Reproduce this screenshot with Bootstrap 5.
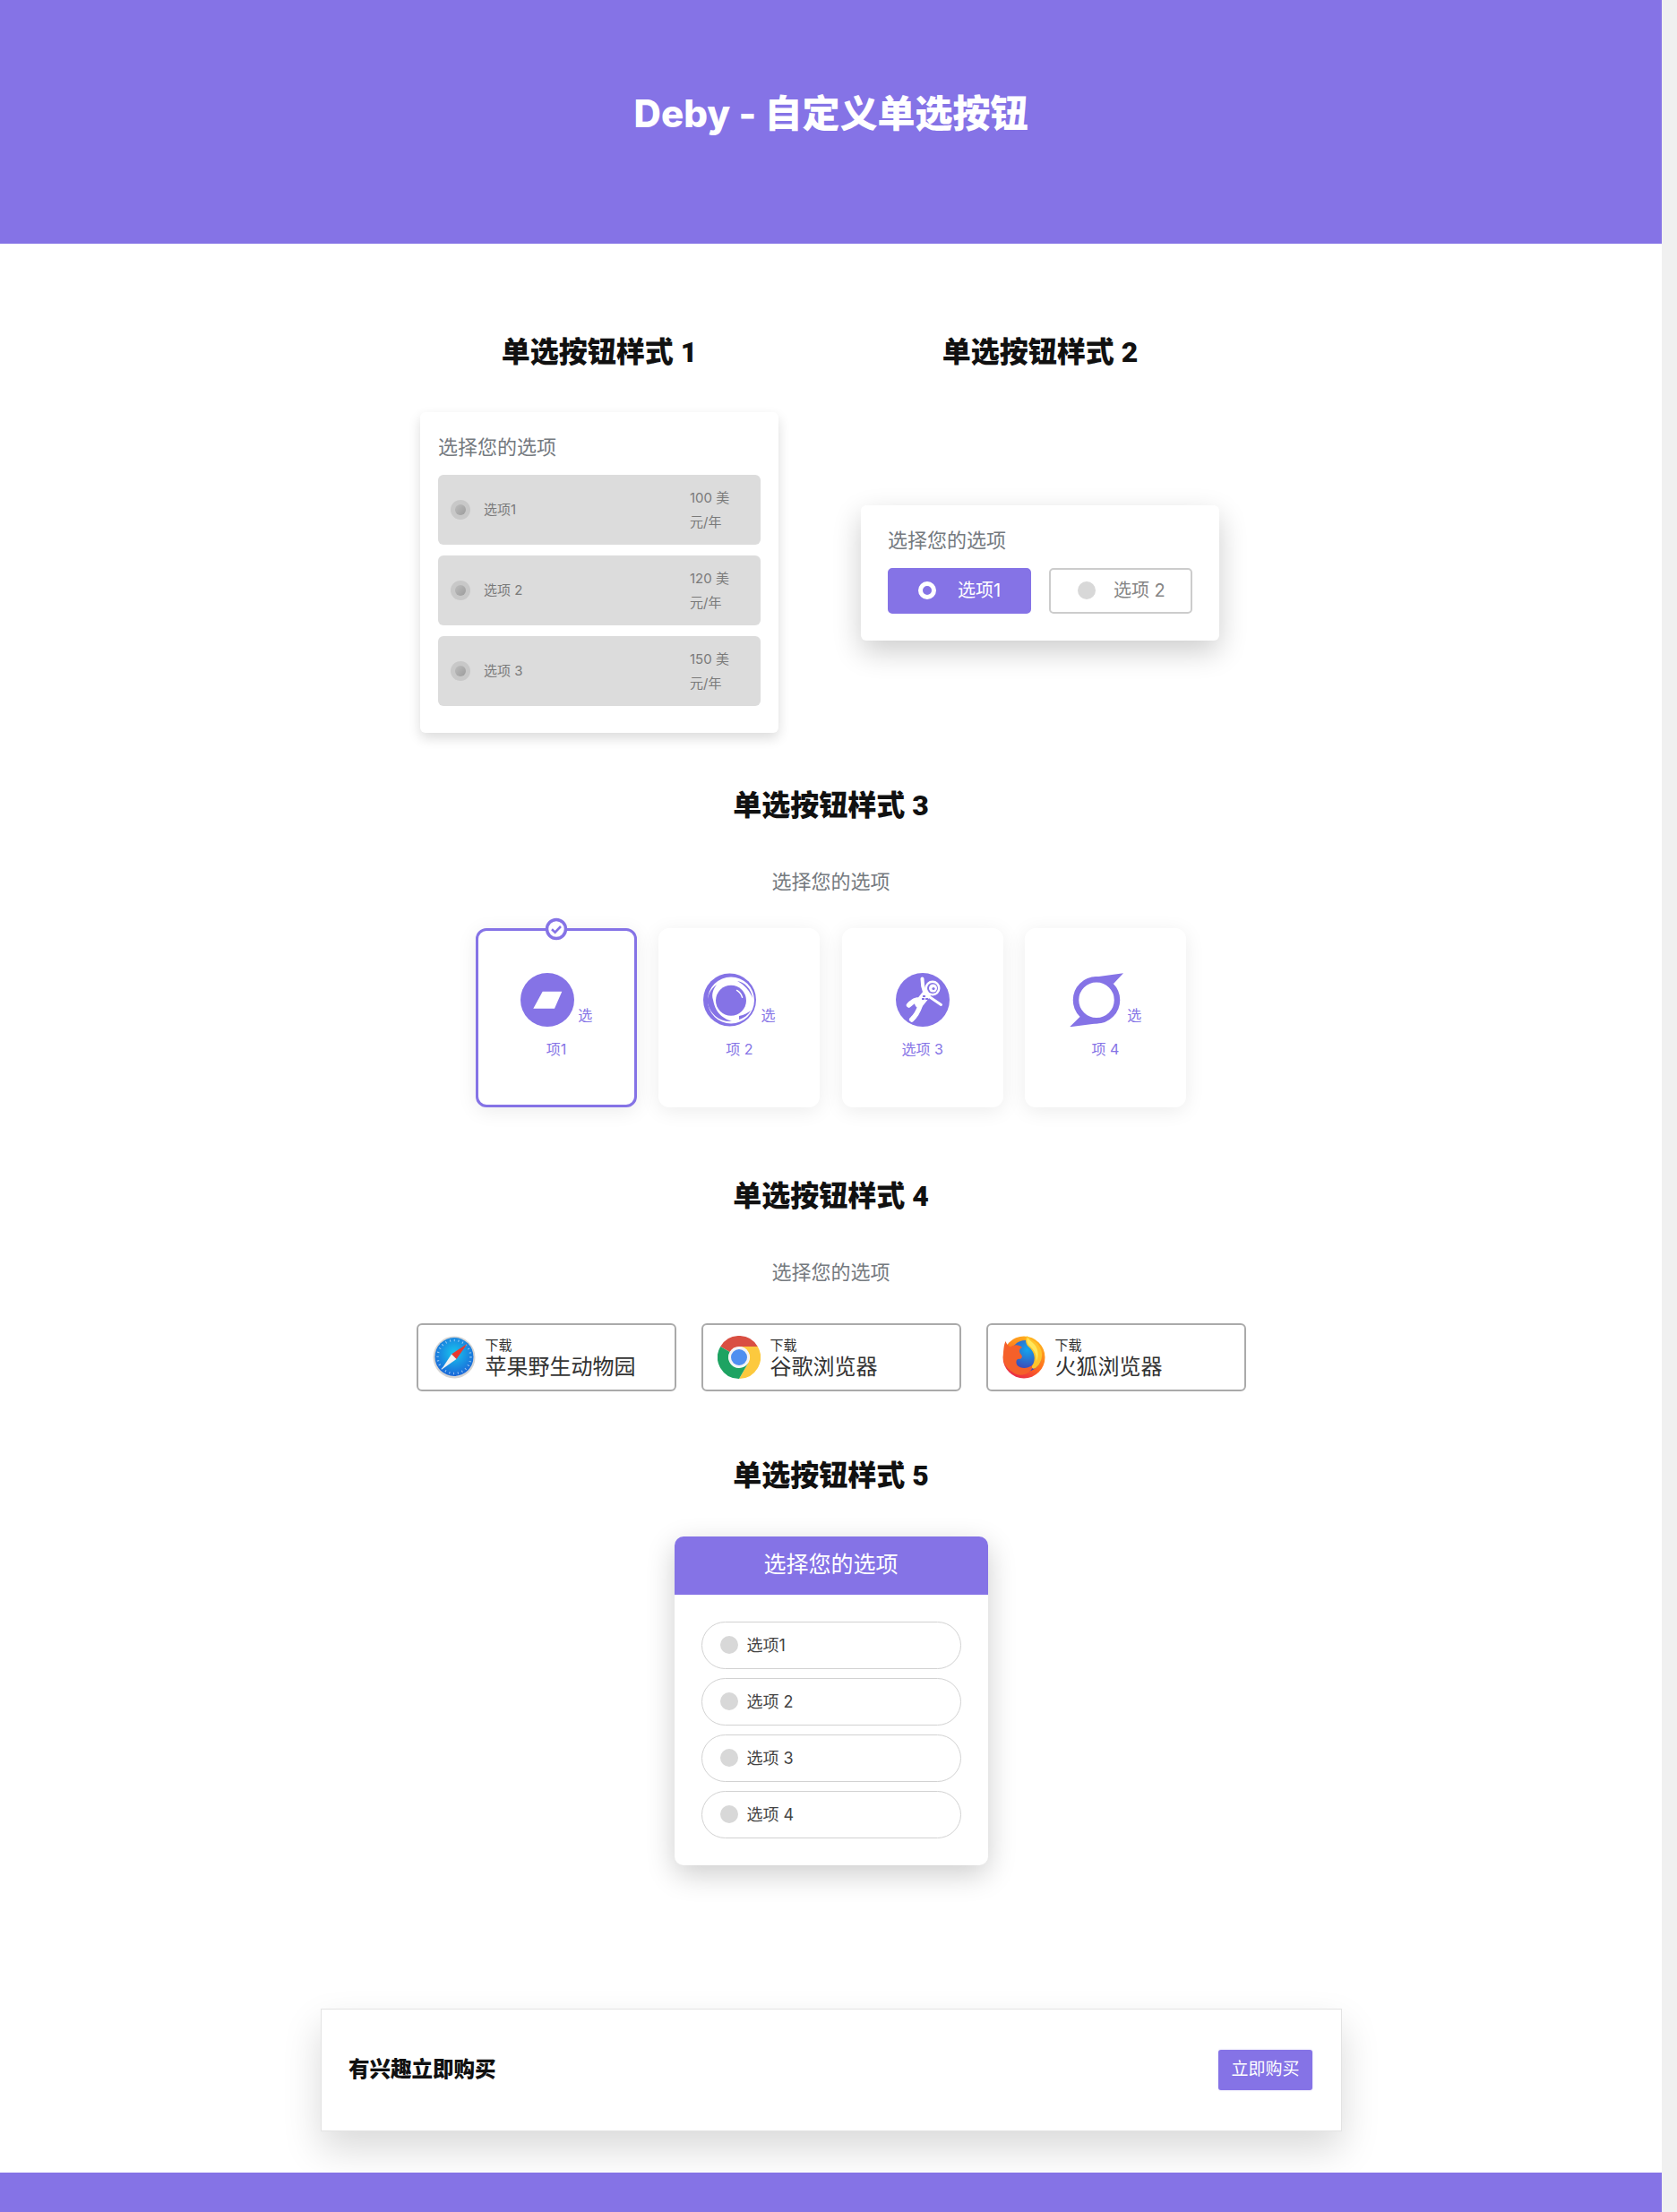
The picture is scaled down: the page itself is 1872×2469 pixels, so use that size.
<!DOCTYPE html>
<html lang="zh">
<head>
<meta charset="utf-8">
<title>Deby - 自定义单选按钮</title>
<link href="https://cdn.jsdelivr.net/npm/bootstrap@5.3.0/dist/css/bootstrap.min.css" rel="stylesheet">
<style>
:root{--pv:#8573e6;}
html,body{margin:0;background:#f0f0f0;}
body{font-family:Inter,"Noto Sans CJK SC",sans-serif;color:#212529;font-weight:400;}
.shell{width:1855px;height:2469px;background:#fff;overflow:hidden;}
.hero{height:272px;background:var(--pv);padding-top:102px;}
.hero h1{font-size:42px;line-height:50px;font-weight:800;color:#fff;margin:0;text-align:center;font-family:Inter,"Noto Sans CJK SC",sans-serif;}
.sec-head{font-size:32px;line-height:38px;font-weight:900;color:#111;text-align:center;margin:0;font-family:Roboto,"Noto Sans CJK SC",sans-serif;}
.sub-head{font-size:22px;line-height:33px;color:#757a7f;text-align:center;margin:0;}
.pair{width:984px;margin:102px 0 0 423px;}
.pair-col{width:492px;}
.pair-body{height:358px;margin-top:48px;}
.box-one{width:400px;height:358px;padding:20px;border-radius:6px;box-shadow:0 6px 14px rgba(0,0,0,.14);}
.box-title{font-size:22px;line-height:38px;color:#757a7f;margin-bottom:10px;}
.plan{height:78px;background:#dcdcdc;border-radius:6px;padding-left:14px;margin-top:12px;color:#7a7a7a;font-size:15px;}
.dot-a{width:22px;height:22px;border-radius:50%;background:#c8c8c8;}
.dot-a i{display:block;width:12px;height:12px;border-radius:50%;background:linear-gradient(135deg,#bdbdbd,#9c9c9c);}
.plan-name{margin-left:15px;}
.plan-price{width:79px;margin-left:auto;line-height:27px;}
.box-two{width:400px;height:151px;padding:21px 30px;border-radius:6px;box-shadow:0 12px 32px rgba(0,0,0,.2);}
.box-two .box-title{line-height:36px;}
.pick-row{gap:20px;margin-top:13px;}
.pick{width:160px;height:51px;border-radius:5px;font-size:20px;padding-left:35px;color:#858585;border:2px solid #ccc;background:#fff;}
.pick.on{background:var(--pv);border-color:var(--pv);color:#fff;}
.pick .pin{width:20px;height:20px;border-radius:50%;background:#d8d8d8;margin-right:24px;flex:none;margin-left:-3px;}
.pick.off{padding-left:30px;}
.pick.off .pin{margin-right:20px;margin-left:0;}
.pick.on .pin{background:var(--pv);border:5px solid #fff;}
.mt-s3{margin-top:62px;}
.mt-sub{margin-top:50px;}
.tiles{gap:24.33px;margin-top:35px;}
.tile{width:180px;height:200px;background:#fff;border-radius:12px;box-shadow:0 4px 22px rgba(0,0,0,.08);text-align:center;color:var(--pv);font-size:16px;padding-top:50px;position:relative;}
.tile.sel{border:3px solid var(--pv);padding-top:47px;box-shadow:0 4px 22px rgba(0,0,0,.08);}
.tile svg{vertical-align:-7px;}
.tile .ln2{display:block;margin-top:13px;line-height:24px;}
.tile .ln1{display:block;line-height:60px;height:60px;white-space:nowrap;}
.tile svg.tile-check{position:absolute;left:50%;top:-15px;transform:translateX(-50%);width:26px;height:26px;}
.mt-s4{margin-top:80px;}
.dl-row{gap:28px;margin-top:39.5px;}
.dl{width:290px;height:76px;border:2px solid #aaa;border-radius:6px;padding-left:16px;color:#333;background:#fff;}
.dl svg{flex:none;margin-right:11px;}
.dl small{display:block;font-size:15px;line-height:18px;margin-top:4px;}
.dl b{display:block;font-size:24px;line-height:30px;font-weight:400;}
.mt-s5{margin-top:75px;}
.box-five{width:350px;height:367px;margin:49px auto 0;border-radius:10px;box-shadow:0 10px 32px rgba(0,0,0,.2);overflow:hidden;background:#fff;}
.box-five-top{height:65px;background:var(--pv);color:#fff;font-size:25px;line-height:63px;text-align:center;}
.box-five-list{padding:30px;gap:10px;}
.pill{height:53px;border:1.5px solid #d2d2d2;border-radius:27px;padding-left:20px;font-size:18px;color:#444;}
.pill i{display:block;width:20px;height:20px;border-radius:50%;background:#d8d8d8;margin-right:10px;}
.cta{width:1140px;height:137px;margin:160px 0 0 358px;border:1px solid #e3e3e3;background:#fff;padding:0 32px 0 30px;box-shadow:0 20px 40px rgba(0,0,0,.15);}
.cta-txt{font-size:23.5px;font-weight:900;color:#111;margin:0;}
.cta-btn{width:105px;height:45px;background:var(--pv);color:#fff;font-size:19px;border:0;border-radius:3px;padding:0;box-shadow:0 0 2px rgba(135,116,230,.4);}
.foot{height:45px;background:var(--pv);margin-top:46px;}
</style>
</head>
<body>
<div class="shell">
  <header class="hero"><h1>Deby - 自定义单选按钮</h1></header>

  <div class="pair d-flex">
    <div class="pair-col">
      <h2 class="sec-head">单选按钮样式 1</h2>
      <div class="pair-body d-flex justify-content-center align-items-center">
        <div class="box-one">
          <div class="box-title">选择您的选项</div>
          <div class="plan d-flex align-items-center"><span class="dot-a d-flex align-items-center justify-content-center"><i></i></span><span class="plan-name">选项1</span><span class="plan-price">100 美<br>元/年</span></div>
          <div class="plan d-flex align-items-center"><span class="dot-a d-flex align-items-center justify-content-center"><i></i></span><span class="plan-name">选项 2</span><span class="plan-price">120 美<br>元/年</span></div>
          <div class="plan d-flex align-items-center"><span class="dot-a d-flex align-items-center justify-content-center"><i></i></span><span class="plan-name">选项 3</span><span class="plan-price">150 美<br>元/年</span></div>
        </div>
      </div>
    </div>
    <div class="pair-col">
      <h2 class="sec-head">单选按钮样式 2</h2>
      <div class="pair-body d-flex justify-content-center align-items-center">
        <div class="box-two">
          <div class="box-title mb-0">选择您的选项</div>
          <div class="pick-row d-flex">
            <div class="pick on d-flex align-items-center"><span class="pin"></span>选项1</div>
            <div class="pick off d-flex align-items-center"><span class="pin"></span>选项 2</div>
          </div>
        </div>
      </div>
    </div>
  </div>

  <h2 class="sec-head mt-s3">单选按钮样式 3</h2>
  <p class="sub-head mt-sub">选择您的选项</p>
  <div class="tiles d-flex justify-content-center">
    <div class="tile sel">
      <svg class="tile-check" viewBox="0 0 26 26"><circle cx="13" cy="13" r="10.5" fill="#fff" stroke="#8573e6" stroke-width="3.5"/><path d="M8 13.2l3.6 3.4 6.400-6.600" fill="none" stroke="#8573e6" stroke-width="2.600"/></svg>
      <span class="ln1"><svg width="60" height="60" viewBox="0 0 60 60"><circle cx="30" cy="30" r="30" fill="#8573e6"/><path d="M24.7 20.7H46.3L38 39.7H14.3Z" fill="#fff"/></svg> 选</span>
      <span class="ln2">项1</span>
    </div>
    <div class="tile">
      <span class="ln1"><svg width="60" height="60" viewBox="0 0 60 60"><circle cx="29.500" cy="30" r="29.500" fill="#8573e6"/><circle cx="31" cy="30.500" r="26" fill="#fff"/><path d="M5 34C8 46 18 55 32 54C24 51 14 47 11 30C9 24 11 18 15 13C8 18 4 26 5 34Z" fill="#8573e6"/><path d="M38 9C46 10 54 18 55 28C52 20 46 13 38 9ZM40 52C46 50 50 47 53 42C50 44 46 47 40 48Z" fill="#8573e6"/><circle cx="31" cy="30.700" r="17" fill="#8573e6"/><path d="M37.500 19.400A13 13 0 0 1 43.600 27.300" fill="none" stroke="#fff" stroke-width="1.400" stroke-linecap="round"/></svg> 选</span>
      <span class="ln2">项 2</span>
    </div>
    <div class="tile">
      <span class="ln1"><svg width="60" height="60" viewBox="0 0 60 60"><circle cx="30" cy="30" r="30" fill="#8573e6"/><g fill="none" stroke="#fff" stroke-linecap="round" stroke-linejoin="round"><path d="M29.500 6.500C29.500 12 30 16 32 21" stroke-width="4"/><path d="M34 24L26 34" stroke-width="10"/><path d="M38 27L50.500 35.500" stroke-width="3"/><path d="M24 30C20 31 17 33 14.500 36" stroke-width="5.500"/><path d="M27 37C25 43 22 48 17.700 52" stroke-width="5.500"/></g><circle cx="41" cy="17" r="8.500" fill="#fff"/><circle cx="41" cy="17" r="6" fill="#8573e6"/><circle cx="41.500" cy="17" r="4.500" fill="#fff"/><circle cx="42" cy="17.500" r="1.600" fill="#8573e6"/><path d="M30 25h3v2h-3zM33 28h3v2h-3zM29 28h3v2h-3z" fill="#8573e6"/></svg></span>
      <span class="ln2">选项 3</span>
    </div>
    <div class="tile">
      <span class="ln1"><svg width="60" height="60" viewBox="0 0 60 60"><path d="M60 .3L49 12 27 4.700ZM0 60.300L11.700 48.700 33 56Z" fill="#8573e6"/><circle cx="30" cy="30.300" r="23" fill="none" stroke="#8573e6" stroke-width="6.500"/></svg> 选</span>
      <span class="ln2">项 4</span>
    </div>
  </div>

  <h2 class="sec-head mt-s4">单选按钮样式 4</h2>
  <p class="sub-head mt-sub">选择您的选项</p>
  <div class="dl-row d-flex justify-content-center">
    <div class="dl d-flex align-items-center">
      <svg width="48" height="48" viewBox="0 0 48 48"><defs><radialGradient id="sf" cx=".5" cy=".4" r=".65"><stop offset="0" stop-color="#18c6ee"/><stop offset="1" stop-color="#1a5ed6"/></radialGradient></defs><circle cx="24" cy="24" r="23.500" fill="#d4d4d4"/><circle cx="24" cy="23.500" r="21.500" fill="url(#sf)"/><circle cx="24" cy="23.500" r="18.500" fill="none" stroke="#cfe6fb" stroke-width="2.500" stroke-dasharray="1 3.800" opacity=".7"/><path d="M38.500 9L21 20.500 26.500 26Z" fill="#e8392f"/><path d="M9.500 38L26.500 26 21 20.500Z" fill="#f2f2f2"/></svg>
      <div><small>下载</small><b>苹果野生动物园</b></div>
    </div>
    <div class="dl d-flex align-items-center">
      <svg width="48" height="48" viewBox="0 0 48 48"><path d="M3.200 12A24 24 0 0 1 44.800 12H24A12 12 0 0 0 13.600 18Z" fill="#d94f42"/><path d="M44.800 12A24 24 0 0 1 24 48L34.400 30A12 12 0 0 0 24 12Z" fill="#fcc93e"/><path d="M3.200 12A24 24 0 0 0 24 48L34.400 30A12 12 0 0 1 13.600 18Z" fill="#1ea362"/><circle cx="24" cy="24" r="11.500" fill="#f4f4f4"/><circle cx="24" cy="24" r="9" fill="#4f8ff0"/></svg>
      <div><small>下载</small><b>谷歌浏览器</b></div>
    </div>
    <div class="dl d-flex align-items-center">
      <svg width="48" height="48" viewBox="0 0 48 48"><defs><linearGradient id="fo" x1=".7" y1="0" x2=".2" y2="1"><stop offset="0" stop-color="#ffb81f"/><stop offset=".55" stop-color="#ff6a1c"/><stop offset="1" stop-color="#e5204f"/></linearGradient><radialGradient id="fb" cx=".55" cy=".3" r=".8"><stop offset="0" stop-color="#13a5ee"/><stop offset="1" stop-color="#4a2ea8"/></radialGradient></defs><circle cx="24" cy="24" r="23.500" fill="url(#fo)"/><circle cx="26" cy="22.500" r="17.500" fill="url(#fb)"/><path d="M1 24C1 17 1.500 10 3.500 6 4.500 9 6 11 9 12.500 13 9.500 18 9.500 22 13 19 14 18 17 20 20 22 22 23 24 20 26 16 25 14.500 28 16 32 19 37 29 38 35 31 33 43 20 47 12 41 5 37 1 31 1 24Z" fill="#f5602a"/><path d="M27.500 0C25 5 26 9 29 12 35 17 37.500 24 34.500 31 31 36 34 38 37 36 46 29 47 15 37 7 33 4.500 30 3 27.500 0Z" fill="#ffc42b"/><path d="M28 2C26.500 6 28 9 30 11 36 16 39 22 37.500 29 42 21 39 12 34 8 31.500 6 29.500 4 28 2Z" fill="#ffe65a"/></svg>
      <div><small>下载</small><b>火狐浏览器</b></div>
    </div>
  </div>

  <h2 class="sec-head mt-s5">单选按钮样式 5</h2>
  <div class="box-five">
    <div class="box-five-top">选择您的选项</div>
    <div class="box-five-list d-flex flex-column">
      <div class="pill d-flex align-items-center"><i></i>选项1</div>
      <div class="pill d-flex align-items-center"><i></i>选项 2</div>
      <div class="pill d-flex align-items-center"><i></i>选项 3</div>
      <div class="pill d-flex align-items-center"><i></i>选项 4</div>
    </div>
  </div>

  <div class="cta d-flex align-items-center justify-content-between">
    <h3 class="cta-txt">有兴趣立即购买</h3>
    <button type="button" class="btn cta-btn">立即购买</button>
  </div>
  <footer class="foot"></footer>
</div>
<script src="https://cdn.jsdelivr.net/npm/bootstrap@5.3.0/dist/js/bootstrap.bundle.min.js"></script>
</body>
</html>
